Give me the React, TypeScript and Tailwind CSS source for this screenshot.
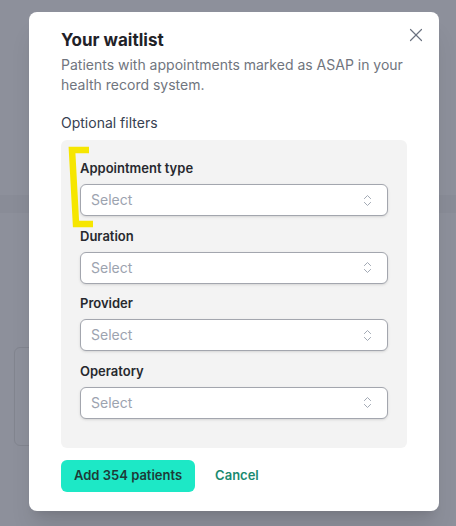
import { ChevronsUpDown, X } from "lucide-react";

const FILTERS = ["Appointment type", "Duration", "Provider", "Operatory"];

function SelectBox() {
  return (
    <div className="flex h-8 items-center justify-between rounded-md border border-[#a3a6ae] bg-white pl-2.5 pr-3 shadow-sm">
      <span className="text-sm text-[#9ca3af]">Select</span>
      <ChevronsUpDown className="h-[15px] w-[15px] text-[#9ca3af]" strokeWidth={1.5} />
    </div>
  );
}

export default function App() {
  return (
    <div
      className="relative h-[526px] w-[456px] overflow-hidden bg-[#8d909b]"
      style={{ fontFamily: "Inter, 'Noto Sans', sans-serif" }}
    >
      {/* faint page behind the overlay */}
      <div className="absolute inset-x-0 top-[195px] h-[18px] bg-[#898c97]" />
      <div className="absolute left-[14px] top-[347px] h-[99px] w-[60px] rounded-md border border-[#82858f]" />

      {/* ── Modal ───────────────────────────────────────────── */}
      <div className="absolute left-[29px] top-[12px] w-[410px] rounded-lg bg-white px-8 pb-[19px] pt-4 shadow-xl">
        <button className="absolute right-[12px] top-[12px] text-[#6b7280]">
          <X className="h-[22px] w-[22px]" strokeWidth={1.3} />
        </button>

        <h2 className="text-[17px] font-bold leading-6 text-[#1f2228]">Your waitlist</h2>
        <p className="mt-[3px] text-sm leading-5 text-[#70757e]">
          Patients with appointments marked as ASAP in your health record system.
        </p>

        <p className="mt-[18px] text-sm leading-5 text-[#374151]">Optional filters</p>

        {/* Filters panel */}
        <div className="relative mt-[7px] flex flex-col gap-[9.5px] rounded-md bg-[#f3f3f3] px-[19px] pb-[29px] pt-[18px]">
          {FILTERS.map((label) => (
            <div key={label} className="flex flex-col gap-1.5">
              <label className="text-[13px] font-semibold leading-5 text-[#27292e]">{label}</label>
              <SelectBox />
            </div>
          ))}

          {/* yellow marker annotation */}
          <svg
            className="absolute left-0 top-0"
            width="40"
            height="100"
            viewBox="0 0 40 100"
          >
            <path
              d="M28 10 L11 10 L15 84 L32 84"
              fill="none"
              stroke="#f6e600"
              strokeWidth="6.5"
              strokeLinejoin="miter"
            />
          </svg>
        </div>

        {/* Actions */}
        <div className="mt-3 flex items-center gap-5">
          <button className="h-8 rounded-md bg-[#1de8c6] px-[13px] text-[13px] font-semibold text-[#1d3b38]">
            Add 354 patients
          </button>
          <button className="text-[13px] font-semibold text-[#1a8a70]">Cancel</button>
        </div>
      </div>
    </div>
  );
}
